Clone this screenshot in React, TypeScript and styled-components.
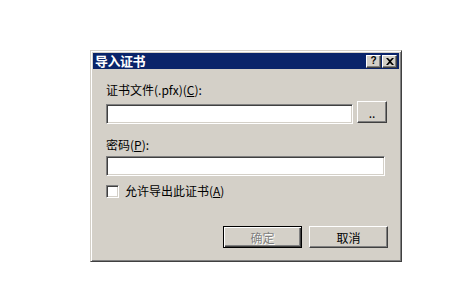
import styled, { createGlobalStyle } from 'styled-components';

const GlobalStyle = createGlobalStyle`
  html, body {
    margin: 0;
    padding: 0;
    background: #ffffff;
  }
  body {
    font-family: 'Noto Sans CJK SC', 'Liberation Sans', sans-serif;
    font-size: 12px;
  }
`;

const Page = styled.div`
  width: 452px;
  height: 292px;
  box-sizing: border-box;
  padding: 50px 0 0 90px;
`;

/* classic raised window frame */
const Dialog = styled.div`
  box-sizing: border-box;
  width: 312px;
  height: 212px;
  padding: 1px;
  background: #d4d0c8;
  border: 1px solid;
  border-color: #d4d0c8 #404040 #404040 #d4d0c8;
  box-shadow: inset 1px 1px 0 #ffffff, inset -1px -1px 0 #808080;
  display: flex;
  flex-direction: column;
`;

const TitleBar = styled.div`
  height: 16px;
  margin: 1px 1px 0 1px;
  background: #0a246a;
  display: flex;
  align-items: center;
  padding: 0 2px 0 2px;
`;

const TitleText = styled.span`
  flex: 1;
  color: #ffffff;
  font-weight: 700;
  font-size: 13px;
  line-height: 16px;
  letter-spacing: -0.5px;
`;

const CaptionGroup = styled.div`
  display: flex;
  gap: 1px;
`;

const CaptionButton = styled.div`
  box-sizing: border-box;
  width: 15px;
  height: 13px;
  background: #d4d0c8;
  border: 1px solid;
  border-color: #ffffff #404040 #404040 #ffffff;
  box-shadow: inset -1px -1px 0 #808080;
  display: flex;
  align-items: center;
  justify-content: center;
  color: #000000;
  font-family: 'Liberation Sans', sans-serif;
  font-weight: 700;
  font-size: 10px;
  line-height: 10px;
`;

const Content = styled.div`
  flex: 1;
  display: flex;
  flex-direction: column;
  padding: 14px 12px 0 14px;
`;

const Label = styled.div<{ $top?: number }>`
  height: 14px;
  line-height: 14px;
  margin-top: ${(p) => p.$top ?? 0}px;
  color: #000000;
  font-size: 12px;
  white-space: nowrap;
`;

const Key = styled.span`
  text-decoration: underline;
`;

const FileRow = styled.div`
  margin-top: 4px;
  display: flex;
  align-items: flex-start;
  gap: 4px;
  margin-right: 1px;
`;

const TextBox = styled.div<{ $width?: number; $top?: number }>`
  box-sizing: border-box;
  height: 20px;
  width: ${(p) => (p.$width ? `${p.$width}px` : 'auto')};
  flex: ${(p) => (p.$width ? '0 0 auto' : '1')};
  margin-top: ${(p) => p.$top ?? 0}px;
  background: #ffffff;
  border: 1px solid;
  border-color: #808080 #ffffff #ffffff #808080;
  box-shadow: inset 1px 1px 0 #404040, inset -1px -1px 0 #d4d0c8;
`;

const PushButton = styled.div<{ $width: number; $height: number; $isDefault?: boolean; $disabled?: boolean }>`
  box-sizing: border-box;
  width: ${(p) => p.$width}px;
  height: ${(p) => p.$height}px;
  background: #d4d0c8;
  border: 1px solid;
  border-color: ${(p) =>
    p.$isDefault ? '#000000' : '#ffffff #404040 #404040 #ffffff'};
  box-shadow: ${(p) =>
    p.$isDefault
      ? 'inset 1px 1px 0 #ffffff, inset -1px -1px 0 #404040, inset -2px -2px 0 #808080'
      : 'inset -1px -1px 0 #808080'};
  display: flex;
  align-items: center;
  justify-content: center;
  font-size: 12px;
  color: ${(p) => (p.$disabled ? '#808080' : '#000000')};
  text-shadow: ${(p) => (p.$disabled ? '1px 1px 0 #ffffff' : 'none')};
`;

const CheckRow = styled.div`
  margin-top: 8px;
  height: 14px;
  display: flex;
  align-items: center;
  gap: 6px;
`;

const CheckBox = styled.div`
  box-sizing: border-box;
  width: 13px;
  height: 13px;
  background: #ffffff;
  border: 1px solid;
  border-color: #808080 #ffffff #ffffff #808080;
  box-shadow: inset 1px 1px 0 #404040, inset -1px -1px 0 #d4d0c8;
`;

const ButtonRow = styled.div`
  margin-top: 28px;
  display: flex;
  justify-content: flex-end;
  gap: 7px;
`;

export default function App() {
  return (
    <Page>
      <GlobalStyle />
      <Dialog>
        <TitleBar>
          <TitleText>导入证书</TitleText>
          <CaptionGroup>
            <CaptionButton>?</CaptionButton>
            <CaptionButton>
              <svg width="8" height="7" viewBox="0 0 8 7">
                <path d="M0 0h2l2 2 2-2h2L5 3.5 8 7H6L4 5 2 7H0l3-3.5z" fill="#000" />
              </svg>
            </CaptionButton>
          </CaptionGroup>
        </TitleBar>
        <Content>
          <Label>
            证书文件(.pfx)(<Key>C</Key>):
          </Label>
          <FileRow>
            <TextBox $top={3} />
            <PushButton $width={30} $height={22}>..</PushButton>
          </FileRow>
          <Label $top={14}>
            密码(<Key>P</Key>):
          </Label>
          <TextBox $width={279} $top={4} />
          <CheckRow>
            <CheckBox />
            <Label>
              允许导出此证书(<Key>A</Key>)
            </Label>
          </CheckRow>
          <ButtonRow>
            <PushButton $width={79} $height={22} $isDefault $disabled>
              确定
            </PushButton>
            <PushButton $width={79} $height={22}>
              取消
            </PushButton>
          </ButtonRow>
        </Content>
      </Dialog>
    </Page>
  );
}
